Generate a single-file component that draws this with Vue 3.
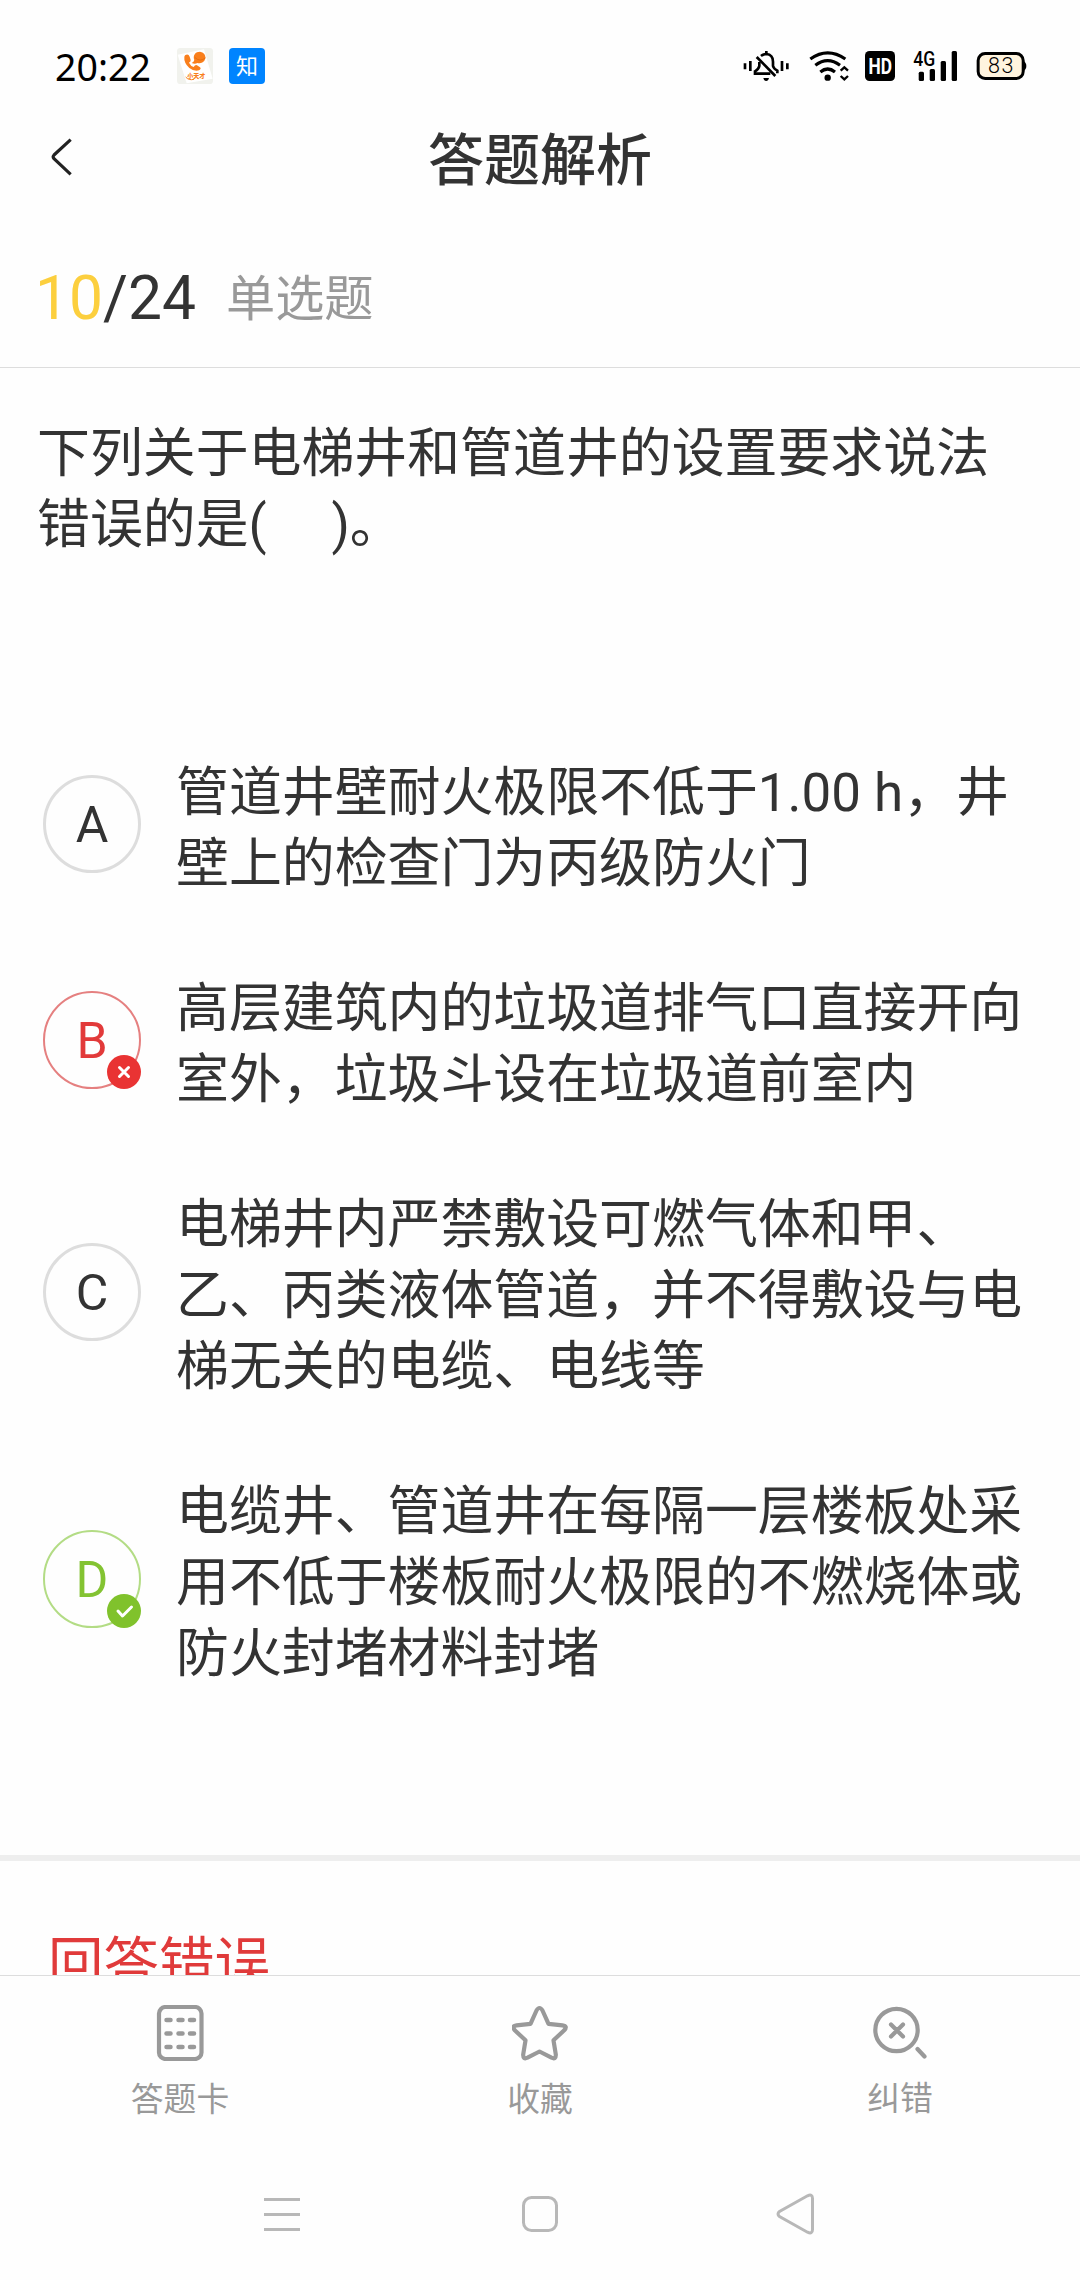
<template>
  <div class="page">
    <div class="status">
      <span class="status__time">20:22</span>
      <svg class="status__app" viewBox="531 84 108 108">
        <rect x="531" y="84" width="108" height="108" rx="10" fill="#f1f2ed" />
        <path d="M533 104 L612 88 L638 176 L560 190 Z" fill="#ffffff" />
        <path
          d="M555 106 Q565 100 569 110 L572 120 Q573 125 567 128 Q572 138 581 141 Q586 133 591 136 L600 142 Q605 147 597 151 Q584 156 568 144 Q551 128 553 110 Z"
          fill="#f97f1c"
        />
        <path
          d="M600 95 A18.500 17.500 0 1 1 592 129 Q585 133 575 129 Q582 126 583 120 A18.500 17.500 0 0 1 600 95 Z"
          fill="#f97f1c"
        />
        <path d="M584 112 Q600 128 617 113" fill="none" stroke="#d9640a" stroke-width="2" />
        <text x="562" y="174" class="status__brand">小天才</text>
        <path d="M557 171 Q566 182 582 178" fill="none" stroke="#f97f1c" stroke-width="3" />
      </svg>
      <span class="status__zhi">知</span>

      <div class="status__right">
        <svg class="status__mute" viewBox="70 60 138 96">
          <path
            d="M76 100 V118 M92 93 V123 M187 93 V123 M203 100 V118"
            fill="none"
            stroke="#000"
            stroke-width="8"
          />
          <path
            d="M124 78 Q131 72 140 72 Q160 74 160 95 V108 Q162 116 173 122 V130 M119 96 V108 Q117 118 106 124 V131 H152"
            fill="none"
            stroke="#000"
            stroke-width="8"
          />
          <path d="M111 81 L167 138" stroke="#000" stroke-width="8" />
          <path d="M136 63 H144 V72 H136 Z M131 144 H148 Q146 153 139.500 153 Q133 153 131 144 Z" />
        </svg>
        <svg class="status__wifi" viewBox="268 60 120 96">
          <path
            d="M272 87 Q324 50 377 87 M287 106 Q324 78 361 106 M302 126 Q324 108 346 126"
            fill="none"
            stroke="#000"
            stroke-width="9.500"
          />
          <circle cx="324" cy="143" r="9.500" />
          <path
            d="M363 122 L374 112 L385 122 M363 138 L374 148 L385 138"
            fill="none"
            stroke="#000"
            stroke-width="7"
          />
        </svg>
        <svg class="status__hd" viewBox="0 0 30 30">
          <rect width="30" height="30" rx="4.500" />
          <text x="3.600" y="23" textLength="23.500" lengthAdjust="spacingAndGlyphs">HD</text>
        </svg>
        <svg class="status__signal" viewBox="0 0 46 32">
          <text x="0.300" y="16" textLength="22" lengthAdjust="spacingAndGlyphs">4G</text>
          <rect x="5.700" y="21.700" width="5.300" height="9.300" rx="1.500" />
          <rect x="16.700" y="19" width="5.300" height="12" rx="1.500" />
          <rect x="27.700" y="11" width="5.300" height="20" rx="1.500" />
          <rect x="38.700" y="1" width="5.300" height="30" rx="1.500" />
        </svg>
        <svg class="status__battery" viewBox="766 60 154 96">
          <rect
            x="772.500"
            y="70.500"
            width="136"
            height="75"
            rx="21"
            fill="#fff4de"
            stroke="#000"
            stroke-width="9"
          />
          <path d="M909 93 Q918 97 918 108 Q918 119 909 123 Z" />
          <text x="802" y="129" textLength="77">83</text>
        </svg>
      </div>
    </div>

    <header class="header">
      <svg class="header__back" viewBox="154 350 66 120">
        <path
          d="M213 358 L163 404 Q158 409 163 415 L213 462"
          fill="none"
          stroke="#222"
          stroke-width="9.500"
        />
      </svg>
      <h1 class="header__title">答题解析</h1>
    </header>

    <div class="progress">
      <span class="progress__count"><em>{{ current }}</em>/{{ total }}</span>
      <span class="progress__type">单选题</span>
    </div>

    <main class="content">
      <p class="question">下列关于电梯井和管道井的设置要求说法错误的是(&emsp;&thinsp;)。</p>

      <ul class="options">
        <li v-for="item in options" :key="item.key" class="option">
          <span class="option__key" :class="item.state && `option__key--${item.state}`">
            {{ item.key }}
            <svg v-if="item.state" class="option__badge" viewBox="0 0 34 34">
              <circle cx="17" cy="17" r="17" />
              <path v-if="item.state === 'wrong'" d="M12.500 12.500 L21.500 21.500 M21.500 12.500 L12.500 21.500" />
              <path v-else d="M11 17 L15.500 22 L24.500 13" />
            </svg>
          </span>
          <span class="option__text">{{ item.text }}</span>
        </li>
      </ul>

      <section class="result">回答错误</section>
    </main>

    <nav class="tabs">
      <div class="tabs__item">
        <svg class="tabs__icon" viewBox="0 0 56 56">
          <rect x="7" y="2" width="42.500" height="52" rx="6.500" />
          <path
            class="tabs__dots"
            d="M14.500 15 h4 M26.500 15 h4 M38 15 h4 M14.500 28.500 h4 M26.500 28.500 h4 M38 28.500 h4 M14.500 42 h4 M26.500 42 h4 M38 42 h4"
          />
        </svg>
        <span>答题卡</span>
      </div>
      <div class="tabs__item">
        <svg class="tabs__icon" viewBox="0 0 56 56">
          <path
            d="M24.500 5.500 Q27.500 0.500 30.500 5.500 L36.500 18.800 L50.500 20.300 Q56 21.100 52.200 25.300 L41.500 35.300 L43.800 49.500 Q44 54.800 39.500 52.700 L27.500 46.500 L15.500 52.700 Q11 54.800 11.200 49.500 L13.500 35.300 L2.800 25.300 Q-1 21.100 4.500 20.300 L18.500 18.800 Z"
          />
        </svg>
        <span>收藏</span>
      </div>
      <div class="tabs__item tabs__item--fix">
        <svg class="tabs__icon" viewBox="0 0 56 56">
          <circle cx="24.500" cy="25" r="21.200" />
          <path d="M19 19.500 L31 31.500 M31 19.500 L19 31.500 M45.500 44 L52.500 51.500" />
        </svg>
        <span>纠错</span>
      </div>
    </nav>

    <div class="sysnav">
      <svg class="sysnav__icon" viewBox="0 0 42 42">
        <path d="M3 4.500 H39 M3 19.500 H39 M3 34.500 H39" />
      </svg>
      <svg class="sysnav__icon" viewBox="0 0 42 42">
        <rect x="5.500" y="2.500" width="33" height="33" rx="8" />
      </svg>
      <svg class="sysnav__icon" viewBox="0 0 42 42">
        <path
          d="M32.500 0.800 Q37.500 -1.500 37.500 3.500 V34.500 Q37.500 39.500 32.500 37.200 L4.500 21.500 Q1.500 19 4.500 16.500 Z"
        />
      </svg>
    </div>
  </div>
</template>

<script setup>
import { ref } from "vue";

const current = ref(10);
const total = ref(24);

const options = [
  { key: "A", text: "管道井壁耐火极限不低于1.00 h，井壁上的检查门为丙级防火门" },
  { key: "B", text: "高层建筑内的垃圾道排气口直接开向室外，垃圾斗设在垃圾道前室内", state: "wrong" },
  { key: "C", text: "电梯井内严禁敷设可燃气体和甲、乙、丙类液体管道，并不得敷设与电梯无关的电缆、电线等" },
  { key: "D", text: "电缆井、管道井在每隔一层楼板处采用不低于楼板耐火极限的不燃烧体或防火封堵材料封堵", state: "right" }
];
</script>

<style>
body {
  background: #fefefe;
}
</style>

<style scoped>
.page {
  display: flex;
  flex-direction: column;
  width: 1080px;
  height: 2280px;
  overflow: hidden;
  background: #fefefe;
  color: #333333;
  font-family: Roboto, "Noto Sans CJK SC", sans-serif;
}

.status {
  display: flex;
  flex: none;
  align-items: center;
  height: 108px;
  padding: 24px 53px 0 55px;
  box-sizing: border-box;
}

.status svg {
  overflow: visible;
}

.status__time {
  width: 122px;
  margin-top: 2px;
  color: #000000;
  font-family: "Noto Sans", sans-serif;
  font-size: 37.5px;
  line-height: 40px;
}

.status__app {
  width: 36px;
  height: 36px;
}

.status__brand {
  fill: #f97f1c;
  font-size: 18px;
  font-weight: 900;
}

.status__zhi {
  width: 36px;
  height: 36px;
  margin-left: 16px;
  border-radius: 4px;
  background: #0084ff;
  color: #ffffff;
  font-size: 22px;
  line-height: 37px;
  text-align: center;
}

.status__right {
  display: flex;
  align-items: center;
  margin-left: auto;
}

.status__mute {
  width: 46px;
  height: 32px;
}

.status__wifi {
  width: 40px;
  height: 32px;
  margin-left: 20px;
}

.status__hd {
  width: 30px;
  height: 30px;
  margin-left: 16px;
}

.status__hd text {
  fill: #ffffff;
  font-size: 22px;
  font-weight: 700;
}

.status__signal {
  width: 46px;
  height: 32px;
  margin-left: 18px;
}

.status__signal text {
  font-size: 19.5px;
  font-weight: 500;
}

.status__battery {
  width: 51px;
  height: 32px;
  margin-left: 17px;
}

.status__battery text {
  font-size: 65px;
  font-weight: 300;
}

.header {
  display: flex;
  flex: none;
  align-items: center;
  height: 97px;
  padding: 0 51px;
}

.header__back {
  width: 22px;
  height: 40px;
}

.header__title {
  flex: 1;
  margin: 9px 22px 0 0;
  font-size: 56px;
  font-weight: 500;
  line-height: 80px;
  text-align: center;
}

.progress {
  display: flex;
  flex: none;
  align-items: center;
  gap: 30px;
  height: 163px;
  padding: 25px 35px 0;
  border-bottom: 1px solid #dddddd;
  box-sizing: border-box;
}

.progress__count {
  font-size: 60.5px;
  line-height: 72px;
}

.progress__count em {
  color: #fccf3e;
  font-style: normal;
}

.progress__type {
  color: #999999;
  font-size: 49.2px;
  line-height: 72px;
}

.content {
  flex: 1;
  min-height: 0;
  overflow: hidden;
}

.question {
  height: 338px;
  margin: 0;
  padding: 51px 60px 0 37px;
  box-sizing: border-box;
  font-size: 52.9px;
  line-height: 71px;
}

.options {
  display: flex;
  flex-direction: column;
  gap: 74px;
  height: 1155px;
  margin: 0;
  padding: 52px 42px 0 43px;
  border-bottom: 6px solid #eeeeee;
  box-sizing: border-box;
  list-style: none;
}

.option {
  display: flex;
  align-items: center;
  gap: 35px;
}

.option__key {
  position: relative;
  flex: none;
  width: 98px;
  height: 98px;
  margin-bottom: 10px;
  border: 3px solid #dddddd;
  border-radius: 50%;
  box-sizing: border-box;
  font-size: 50px;
  line-height: 95px;
  text-align: center;
}

.option__key--wrong {
  border: 2px solid #e58080;
  color: #e23a3a;
  line-height: 97px;
}

.option__key--right {
  border: 2px solid #b3dc85;
  color: #83c332;
  line-height: 97px;
}

.option__badge {
  position: absolute;
  right: -2px;
  bottom: -2px;
  width: 34px;
  height: 34px;
  fill: #e93333;
}

.option__key--right .option__badge {
  fill: #80c22c;
}

.option__badge path {
  fill: none;
  stroke: #ffffff;
  stroke-width: 3;
  stroke-linecap: round;
  stroke-linejoin: round;
}

.option__text {
  flex: 1;
  font-size: 52.9px;
  line-height: 71px;
}

.result {
  padding: 68px 48px 0;
  color: #e03a3a;
  font-size: 55.5px;
  line-height: 72px;
}

.tabs {
  display: flex;
  flex: none;
  height: 185px;
  border-top: 1px solid #dddddd;
  box-sizing: border-box;
}

.tabs__item {
  display: flex;
  flex: 1;
  flex-direction: column;
  align-items: center;
  padding-top: 29px;
  color: #999999;
  font-size: 32.8px;
  line-height: 40px;
}

.tabs__icon {
  width: 56px;
  height: 56px;
  margin-bottom: 19px;
  fill: none;
  stroke: #999999;
  stroke-width: 4.2;
  stroke-linecap: round;
  stroke-linejoin: round;
}

.tabs__item--fix .tabs__icon {
  margin-bottom: 18px;
}

.tabs__dots {
  stroke-width: 4.5;
}

.sysnav {
  display: flex;
  flex: none;
  justify-content: space-between;
  height: 120px;
  padding: 35px 263px 0 261px;
  box-sizing: border-box;
}

.sysnav__icon {
  width: 42px;
  height: 42px;
  overflow: visible;
  fill: none;
  stroke: #b8b8b8;
  stroke-width: 3;
}
</style>
